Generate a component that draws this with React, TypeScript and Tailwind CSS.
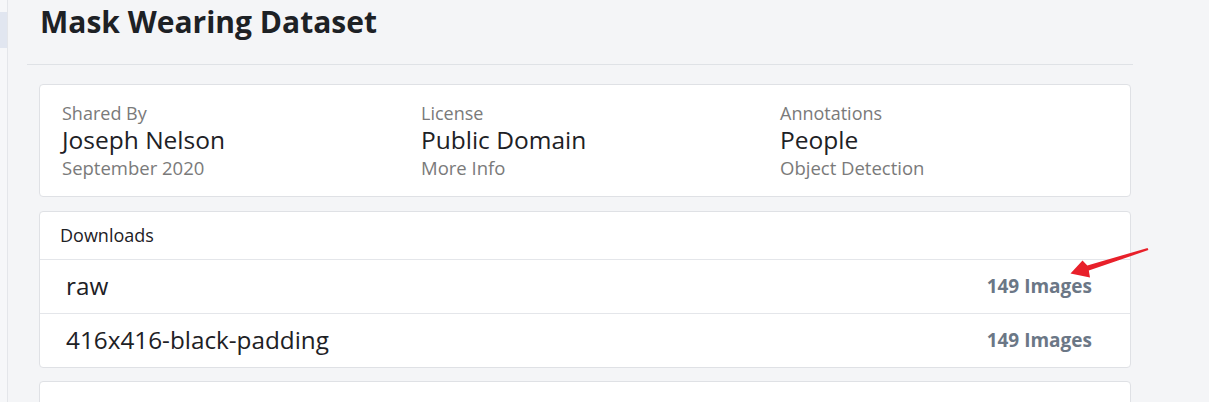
const font = { fontFamily: '"Open Sans", "Noto Sans", Arial, sans-serif' }

interface InfoColumnProps {
  label: string
  value: string
  sub: string
}

function InfoColumn({ label, value, sub }: InfoColumnProps) {
  return (
    <div className="flex flex-col">
      <span className="text-[18px] leading-[24px] text-[#7a7a7a]">{label}</span>
      <span className="text-[24.5px] leading-[30px] text-[#1d2125]">{value}</span>
      <span className="text-[18.5px] leading-[25px] text-[#7a7a7a]">{sub}</span>
    </div>
  )
}

interface DownloadRowProps {
  name: string
  count: number
}

function DownloadRow({ name, count }: DownloadRowProps) {
  return (
    <div className="flex h-[54px] items-center justify-between border-t border-[#e4e6ea] pl-[26px] pr-[38px]">
      <span className="text-[24.3px] text-[#1d2125]">{name}</span>
      <span className="text-[19px] font-bold text-[#6b7786]">{count} Images</span>
    </div>
  )
}

export default function App() {
  return (
    <div className="relative flex h-[402px] w-[1209px] overflow-hidden bg-[#f4f5f7]" style={font}>
      <aside className="w-[8px] shrink-0 border-r border-[#e4e6ea] bg-[#f6f7f9] pt-[12px]">
        <div className="h-[36px] bg-[#e1e6f0]" />
      </aside>

      <main className="w-[1125px] pl-[19px]">
        <header className="flex h-[65px] items-start border-b border-[#dfe2e6] pl-[13px] pt-[1px]">
          <h1 className="text-[30px] font-bold leading-[42px] text-[#1d2125]">Mask Wearing Dataset</h1>
        </header>

        <div className="flex w-[1104px] flex-col pl-[12px]">
          <section className="mt-[19px] grid grid-cols-[359px_359px_1fr] rounded-[4px] border border-[#dfe1e5] bg-white pb-[16px] pl-[22px] pt-[16px]">
            <InfoColumn label="Shared By" value="Joseph Nelson" sub="September 2020" />
            <InfoColumn label="License" value="Public Domain" sub="More Info" />
            <InfoColumn label="Annotations" value="People" sub="Object Detection" />
          </section>

          <section className="mt-[14px] flex flex-col rounded-[4px] border border-[#dfe1e5] bg-white">
            <div className="flex h-[47px] items-center px-[20px] text-[18px] text-[#1d2125]">Downloads</div>
            <DownloadRow name="raw" count={149} />
            <DownloadRow name="416x416-black-padding" count={149} />
          </section>

          <section className="mt-[13px] h-[60px] rounded-[4px] border border-[#dfe1e5] bg-white" />
        </div>
      </main>

      <svg className="pointer-events-none absolute inset-0" width="1209" height="402" viewBox="0 0 1209 402">
        <polygon
          fill="#e8202a"
          points="1147.6,247.9 1148.4,250.1 1088.8,270.4 1090,277.5 1070.5,273.5 1082.5,260.5 1087.3,265.6"
        />
      </svg>
    </div>
  )
}
